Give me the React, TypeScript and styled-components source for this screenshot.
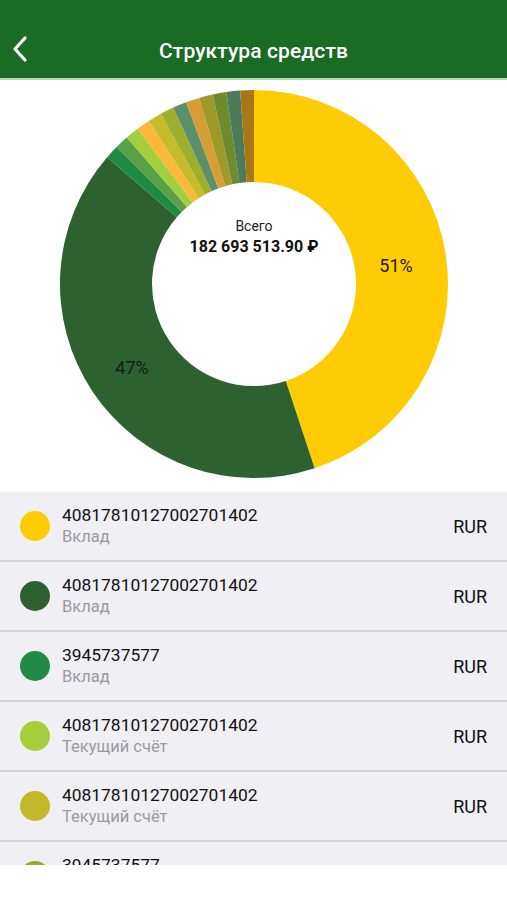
import React from "react";
import styled, { createGlobalStyle } from "styled-components";

const GlobalStyle = createGlobalStyle`
  html, body {
    margin: 0;
    padding: 0;
    background: #ffffff;
  }
  body {
    font-family: Roboto, "Liberation Sans", sans-serif;
    -webkit-font-smoothing: antialiased;
  }
`;

type Slice = { value: number; color: string };

const CX = 254;
const CY = 204;
const R_OUT = 194;
const R_IN = 102;

// degrees, clockwise from 12 o'clock
const slices: Slice[] = [
  { value: 161.8, color: "#ffcb05" },
  { value: 149, color: "#2d6130" },
  { value: 4.1, color: "#1f8a42" },
  { value: 4.1, color: "#5aa047" },
  { value: 4.1, color: "#a4cf3c" },
  { value: 4.1, color: "#fbb93a" },
  { value: 4.1, color: "#c6bb2b" },
  { value: 4.1, color: "#9cb02e" },
  { value: 4.1, color: "#5b9069" },
  { value: 4.1, color: "#d69d35" },
  { value: 4.1, color: "#9d9a2a" },
  { value: 4.1, color: "#6f8b2d" },
  { value: 4.1, color: "#4c7a5b" },
  { value: 4.1, color: "#a87718" },
];

const accounts = [
  { number: "40817810127002701402", kind: "Вклад", color: "#ffcb05" },
  { number: "40817810127002701402", kind: "Вклад", color: "#2d6130" },
  { number: "3945737577", kind: "Вклад", color: "#218a45" },
  { number: "40817810127002701402", kind: "Текущий счёт", color: "#a6cd3a" },
  { number: "40817810127002701402", kind: "Текущий счёт", color: "#c3b82a" },
  { number: "3945737577", kind: "Вклад", color: "#96aa2c" },
];

const pt = (r: number, deg: number) => {
  const a = (deg * Math.PI) / 180;
  return [CX + r * Math.sin(a), CY - r * Math.cos(a)];
};

const arcPath = (from: number, to: number) => {
  const [x1, y1] = pt(R_OUT, from);
  const [x2, y2] = pt(R_OUT, to);
  const [x3, y3] = pt(R_IN, to);
  const [x4, y4] = pt(R_IN, from);
  const large = to - from > 180 ? 1 : 0;
  return `M${x1} ${y1} A${R_OUT} ${R_OUT} 0 ${large} 1 ${x2} ${y2} L${x3} ${y3} A${R_IN} ${R_IN} 0 ${large} 0 ${x4} ${y4} Z`;
};

const Donut = () => {
  let start = 0;
  const total = slices.reduce((s, x) => s + x.value, 0);
  return (
    <svg width="507" height="412" viewBox="0 0 507 412">
      {slices.map((s, i) => {
        const from = (start / total) * 360;
        start += s.value;
        const to = (start / total) * 360;
        return <path key={i} d={arcPath(from, to)} fill={s.color} />;
      })}
      <PctText x="396" y="187">51%</PctText>
      <PctText x="132" y="289">47%</PctText>
    </svg>
  );
};

export default function App() {
  return (
    <>
      <GlobalStyle />
      <Screen>
        <Header>
          <BackButton>
            <svg width="18" height="28" viewBox="0 0 18 28">
              <path d="M14 3 L4 14 L14 25" fill="none" stroke="#fff" strokeWidth="3.2" strokeLinecap="round" strokeLinejoin="round" />
            </svg>
          </BackButton>
          <Title>Структура средств</Title>
        </Header>

        <ChartArea>
          <Donut />
          <Total>
            <TotalLabel>Всего</TotalLabel>
            <TotalValue>182 693 513.90 ₽</TotalValue>
          </Total>
        </ChartArea>

        <List>
          {accounts.map((a, i) => (
            <Row key={i}>
              <Dot $color={a.color} />
              <Info>
                <Number>{a.number}</Number>
                <Kind>{a.kind}</Kind>
              </Info>
              <Currency>RUR</Currency>
            </Row>
          ))}
        </List>
      </Screen>
    </>
  );
}

const Screen = styled.div`
  width: 507px;
  height: 900px;
  display: flex;
  flex-direction: column;
  background: #fff;
  overflow: hidden;
`;

const Header = styled.header`
  position: relative;
  box-sizing: border-box;
  height: 80px;
  flex: 0 0 80px;
  background: #1a6b26;
  border-bottom: 2px solid #b8dcb9;
  display: flex;
  align-items: flex-end;
  justify-content: center;
  padding-bottom: 14px;
`;

const BackButton = styled.div`
  position: absolute;
  left: 8px;
  bottom: 15px;
  width: 24px;
  height: 28px;
  display: flex;
  align-items: center;
  justify-content: center;
`;

const Title = styled.h1`
  margin: 0;
  color: #fff;
  font-size: 21px;
  font-weight: 500;
  line-height: 26px;
  letter-spacing: 0.1px;
`;

const ChartArea = styled.div`
  position: relative;
  height: 412px;
  flex: 0 0 412px;
  display: flex;
  justify-content: center;
`;

const PctText = styled.text`
  font-family: Roboto, "Liberation Sans", sans-serif;
  font-size: 18px;
  fill: #1a1a1a;
  text-anchor: middle;
  dominant-baseline: middle;
`;

const Total = styled.div`
  position: absolute;
  left: 0;
  width: 508px;
  top: 137px;
  display: flex;
  flex-direction: column;
  align-items: center;
  gap: 3px;
`;

const TotalLabel = styled.div`
  font-size: 14px;
  color: #222;
  line-height: 18px;
`;

const TotalValue = styled.div`
  font-size: 16px;
  font-weight: 700;
  color: #111;
  line-height: 18px;
`;

const List = styled.div`
  height: 373px;
  flex: 0 0 373px;
  background: #efeff4;
  overflow: hidden;
`;

const Row = styled.div`
  height: 68px;
  border-bottom: 2px solid #d2d2d6;
  display: flex;
  align-items: center;
  padding: 0 20px;
  gap: 12px;
`;

const Dot = styled.div<{ $color: string }>`
  width: 30px;
  height: 30px;
  border-radius: 50%;
  background: ${(p) => p.$color};
  flex: 0 0 30px;
`;

const Info = styled.div`
  flex: 1;
  display: flex;
  flex-direction: column;
  margin-top: -1px;
`;

const Number = styled.div`
  font-size: 17.4px;
  color: #111;
  line-height: 22px;
`;

const Kind = styled.div`
  font-size: 16.5px;
  color: #9b9b9f;
  line-height: 22px;
`;

const Currency = styled.div`
  font-size: 18px;
  color: #111;
`;
